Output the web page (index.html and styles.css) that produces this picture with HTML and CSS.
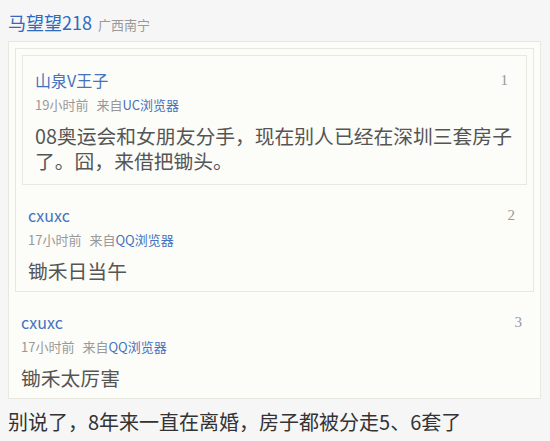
FILE: index.html
```html
<!DOCTYPE html>
<html lang="zh-CN">

<head>
    <meta charset="UTF-8">
    <meta name="viewport" content="width=device-width, initial-scale=1.0">
    <title>评论</title>
    <link rel="stylesheet" href="styles.css">
</head>

<body>
    <div class="wrap">
        <div class="author">
            <a class="authorName" href="#">马望望218</a>
            <span class="authorPlace">广西南宁</span>
        </div>

        <div class="floor">
            <div class="floor">
                <div class="floor floorFirst">
                    <div class="floorBody">
                        <div class="floorHead">
                            <a class="userName" href="#">山泉V王子</a>
                            <span class="floorNum">1</span>
                        </div>
                        <div class="floorTime">19小时前<span class="from">来自<a href="#">UC浏览器</a></span></div>
                        <p class="floorText">08奥运会和女朋友分手，现在别人已经在深圳三套房子了。囧，来借把锄头。</p>
                    </div>
                </div>
                <div class="floorBody">
                    <div class="floorHead">
                        <a class="userName" href="#">cxuxc</a>
                        <span class="floorNum">2</span>
                    </div>
                    <div class="floorTime">17小时前<span class="from">来自<a href="#">QQ浏览器</a></span></div>
                    <p class="floorText">锄禾日当午</p>
                </div>
            </div>
            <div class="floorBody">
                <div class="floorHead">
                    <a class="userName" href="#">cxuxc</a>
                    <span class="floorNum">3</span>
                </div>
                <div class="floorTime">17小时前<span class="from">来自<a href="#">QQ浏览器</a></span></div>
                <p class="floorText">锄禾太厉害</p>
            </div>
        </div>

        <p class="replyText">别说了，8年来一直在离婚，房子都被分走5、6套了</p>
    </div>
</body>

</html>
```

FILE: styles.css
```css
body {
    margin: 0;
    background: #f6f6f6;
    font-family: "Noto Sans CJK SC", "Noto Sans", sans-serif;
    color: #444;
}

a {
    text-decoration: none;
    color: #4472bd;
}

.wrap {
    padding: 8px 9px 0 8px;
}

.author {
    display: flex;
    align-items: baseline;
    gap: 6px;
    height: 28px;
    line-height: 28px;
    margin-bottom: 5px;
}

.authorName {
    font-size: 18px;
    color: #2f6bbf;
}

.authorPlace {
    font-size: 13px;
    color: #999;
}

.floor {
    border: 1px solid #e8e8de;
    background: #fcfcf8;
    padding: 6px 6px 0 6px;
}

.floor > .floor {
    margin-bottom: 12px;
}

.floorFirst {
    padding-bottom: 3px;
}

.floorBody {
    padding: 8px 0 8px 6px;
}

.floorHead {
    display: flex;
    justify-content: space-between;
    align-items: center;
    height: 20px;
    margin-bottom: 5px;
    padding-right: 12px;
}

.userName {
    font-size: 16px;
}

.floorNum {
    font-family: "Liberation Serif", serif;
    font-size: 15px;
    color: #999;
}

.floorTime {
    font-size: 13px;
    line-height: 20px;
    color: #999;
}

.from {
    margin-left: 8px;
}

.floorText {
    margin: 8px 0 0 0;
    font-size: 19.8px;
    line-height: 25px;
    color: #555;
}

.replyText {
    margin: 10px 0 0 0;
    font-size: 20px;
    line-height: 26px;
    color: #333;
}
```
